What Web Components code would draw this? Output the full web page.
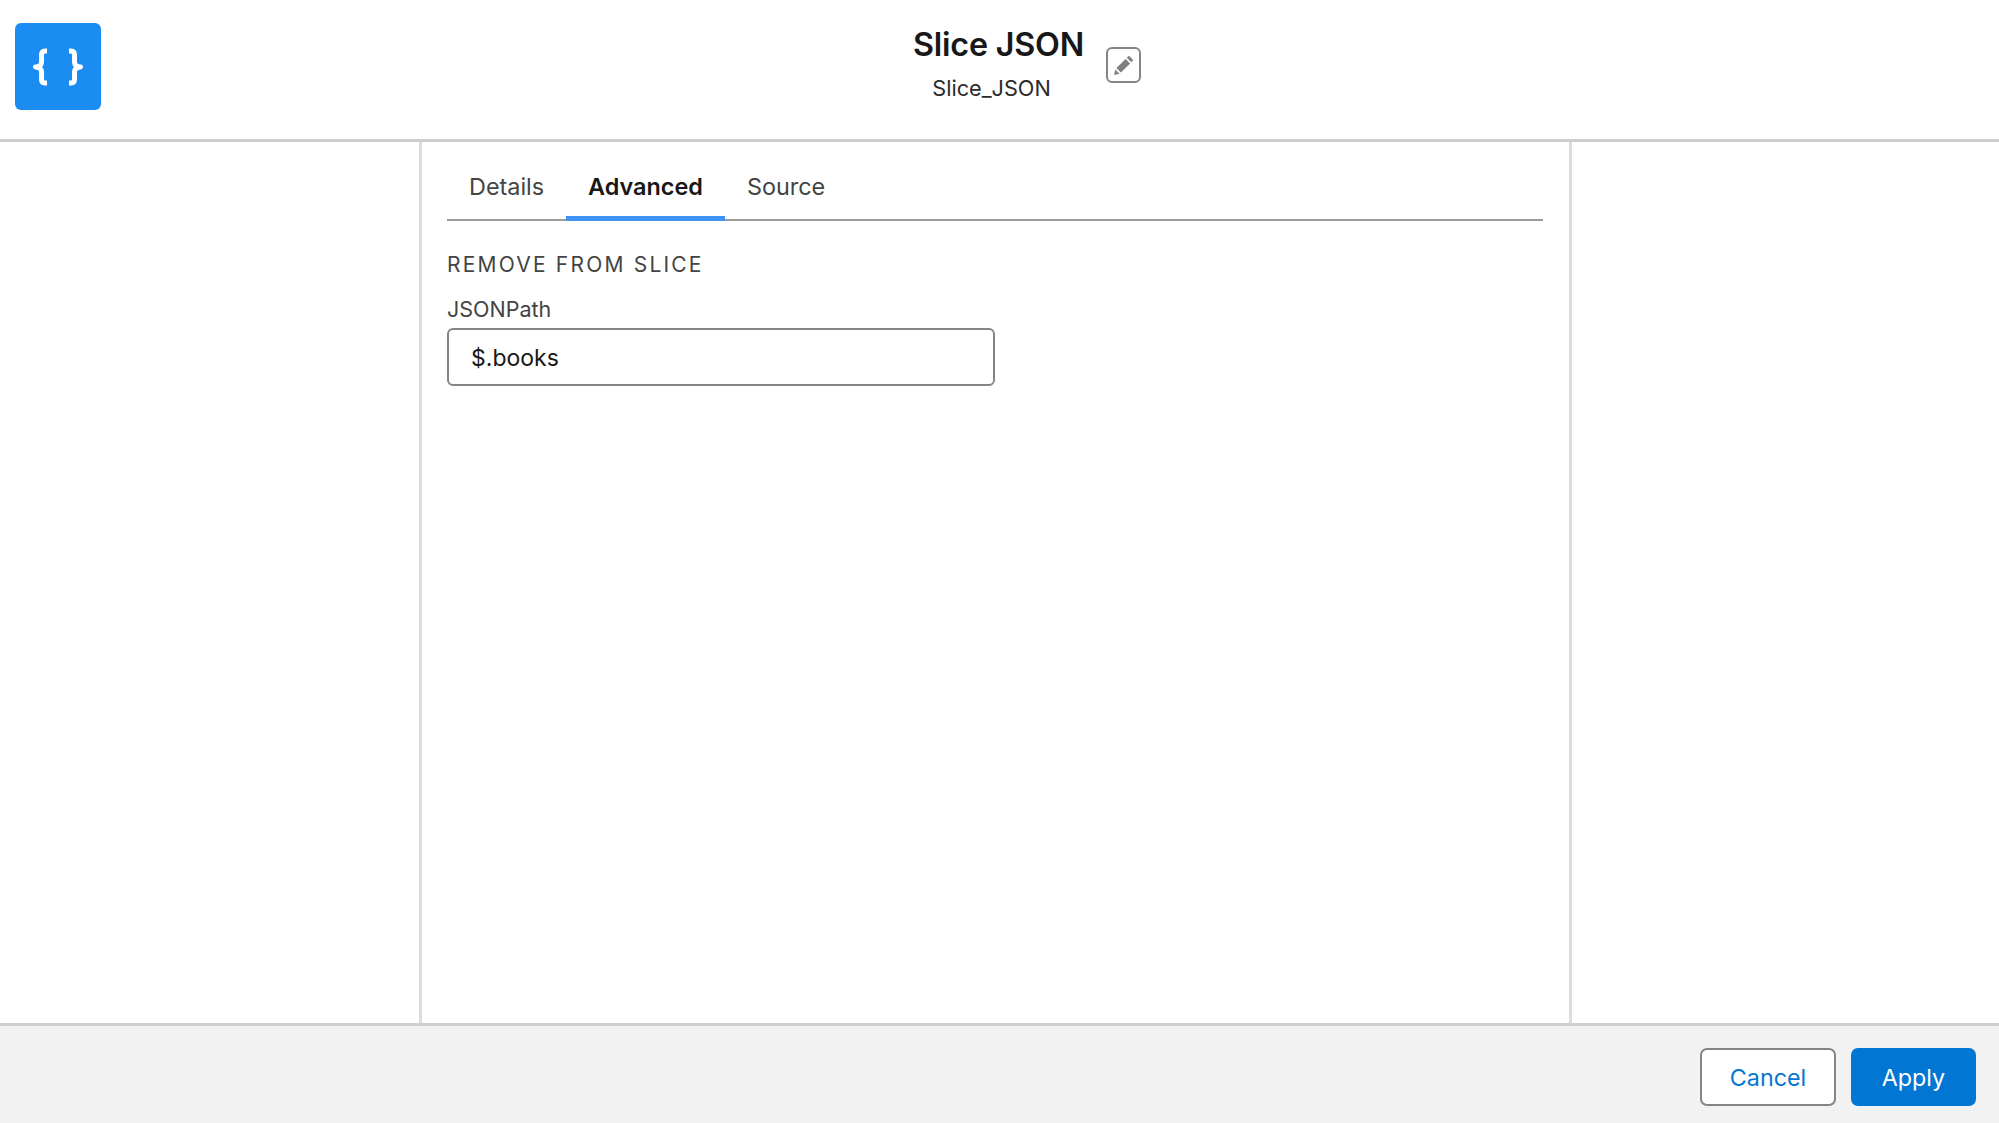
<!DOCTYPE html>
<html>
<head>
<meta charset="utf-8">
<style>
  html, body { margin: 0; height: 100%; background: #fff; font-family: Inter, "Liberation Sans", sans-serif; }
  body { overflow: hidden; }
</style>
</head>
<body>
<slice-modal>
  <modal-header slot="header" heading="Slice JSON" api-name="Slice_JSON"></modal-header>
  <tab-bar slot="tabs" tabs="Details,Advanced,Source" active="Advanced"></tab-bar>
  <text-field slot="body" section="REMOVE FROM SLICE" label="JSONPath" value="$.books"></text-field>
  <action-button slot="footer" label="Cancel"></action-button>
  <action-button slot="footer" label="Apply" primary></action-button>
</slice-modal>

<script>
class SliceModal extends HTMLElement {
  constructor() {
    super();
    this.attachShadow({ mode: 'open' });
    this.shadowRoot.innerHTML = `
      <style>
        :host { display: grid; grid-template-rows: 142px 1fr 100px; height: 1123px; }
        header { border-bottom: 3px solid #cfcfcf; }
        main { display: grid; grid-template-columns: 419px 1fr 427px; min-height: 0; }
        .center {
          border-left: 3px solid #dcdcdc;
          border-right: 3px solid #dcdcdc;
          padding: 0 26px 0 25px;
        }
        footer {
          background: #f2f2f2;
          border-top: 3px solid #cfcfcf;
          display: flex;
          justify-content: flex-end;
          align-items: flex-start;
          gap: 15px;
          padding: 22px 23px 0 0;
        }
      </style>
      <header><slot name="header"></slot></header>
      <main>
        <div></div>
        <div class="center">
          <slot name="tabs"></slot>
          <slot name="body"></slot>
        </div>
        <div></div>
      </main>
      <footer><slot name="footer"></slot></footer>
    `;
  }
}

class ModalHeader extends HTMLElement {
  constructor() {
    super();
    this.attachShadow({ mode: 'open' });
    this.shadowRoot.innerHTML = `
      <style>
        :host { display: block; height: 139px; position: relative; }
        .logo {
          position: absolute; left: 15px; top: 23px;
          width: 86px; height: 87px;
          background: #1b8cf2; border-radius: 6px;
          display: flex; align-items: center; justify-content: center;
        }
        .titles {
          display: flex; flex-direction: column; align-items: center;
          padding: 25px 0 0 0;
          width: 1997px;
        }
        h1 { margin: 0; font-size: 32.3px; line-height: 40px; font-weight: 600; color: #181818; letter-spacing: -0.2px; }
        .api { font-size: 21.7px; line-height: 28px; color: #2b2b2b; margin: 9px 14px 0 0; }
        .edit {
          position: absolute; left: 1106px; top: 47px;
          width: 35px; height: 36px; box-sizing: border-box;
          border: 2px solid #858585; border-radius: 6px; background: #fff;
          display: flex; align-items: center; justify-content: center;
        }
      </style>
      <div class="logo">
        <svg width="52" height="38" viewBox="0 0 52 38" fill="none" stroke="#fff" stroke-width="5" stroke-linecap="butt" stroke-linejoin="round">
          <path d="M15 3H13Q9.5 3 9.5 7V14Q9.5 18.5 3.5 19Q9.5 19.5 9.5 24V31Q9.5 35 13 35H15"/>
          <path d="M37 3H39Q42.5 3 42.5 7V14Q42.5 18.5 48.5 19Q42.5 19.5 42.5 24V31Q42.5 35 39 35H37"/>
        </svg>
      </div>
      <div class="titles">
        <h1></h1>
        <div class="api"></div>
      </div>
      <div class="edit">
        <svg width="21" height="21" viewBox="0 0 21 21" fill="#808080">
          <path d="M1 20l1.3-5.6L6.6 18.7z"/>
          <path d="M3.4 13.1L12.6 3.9l4.5 4.5-9.2 9.2z"/>
          <path d="M13.8 2.7l1.4-1.4q.7-.7 1.4 0l3.1 3.1q.7.7 0 1.4l-1.4 1.4z"/>
        </svg>
      </div>
    `;
    this.shadowRoot.querySelector('h1').textContent = this.getAttribute('heading');
    this.shadowRoot.querySelector('.api').textContent = this.getAttribute('api-name');
  }
}

class TabBar extends HTMLElement {
  constructor() {
    super();
    this.attachShadow({ mode: 'open' });
    const active = this.getAttribute('active');
    const tabs = (this.getAttribute('tabs') || '').split(',');
    this.shadowRoot.innerHTML = `
      <style>
        :host { display: flex; height: 79px; box-sizing: border-box; border-bottom: 2px solid #9c9c9c; }
        .tab {
          padding: 10px 22px 0; font-size: 23.4px; line-height: 28px; color: #444;
          display: flex; align-items: center; height: 79px; box-sizing: border-box;
        }
        .tab.active { font-weight: 600; color: #181818; box-shadow: inset 0 -5px 0 #3f93f2; }
      </style>
      ${tabs.map(t => `<div class="tab ${t === active ? 'active' : ''}">${t}</div>`).join('')}
    `;
  }
}

class TextField extends HTMLElement {
  constructor() {
    super();
    this.attachShadow({ mode: 'open' });
    this.shadowRoot.innerHTML = `
      <style>
        :host { display: block; }
        .section { font-size: 21px; line-height: 26px; letter-spacing: 2.2px; color: #444; margin-top: 31px; }
        label { display: block; font-size: 21.5px; line-height: 26px; color: #444; margin-top: 18px; }
        input {
          display: block; box-sizing: border-box; width: 548px; height: 58px; margin-top: 6px;
          border: 2px solid #858585; border-radius: 6px; padding: 2px 22px 0;
          font: 23px Inter, "Liberation Sans", sans-serif; color: #181818; background: #fff; outline: none;
        }
      </style>
      <div class="section">${this.getAttribute('section')}</div>
      <label>${this.getAttribute('label')}</label>
      <input value="${this.getAttribute('value')}">
    `;
  }
}

class ActionButton extends HTMLElement {
  constructor() {
    super();
    this.attachShadow({ mode: 'open' });
    this.shadowRoot.innerHTML = `
      <style>
        :host { display: block; }
        button {
          box-sizing: border-box; height: 58px; border-radius: 7px; cursor: pointer;
          font: 23.3px Inter, "Liberation Sans", sans-serif;
          padding: 0; display: block;
          width: 136px; background: #fff; color: #0176d3; border: 2px solid #858585;
        }
        :host([primary]) button { width: 125px; background: #0176d3; color: #fff; border-color: #0176d3; }
      </style>
      <button type="button">${this.getAttribute('label')}</button>
    `;
  }
}

customElements.define('modal-header', ModalHeader);
customElements.define('tab-bar', TabBar);
customElements.define('text-field', TextField);
customElements.define('action-button', ActionButton);
customElements.define('slice-modal', SliceModal);
</script>
</body>
</html>
